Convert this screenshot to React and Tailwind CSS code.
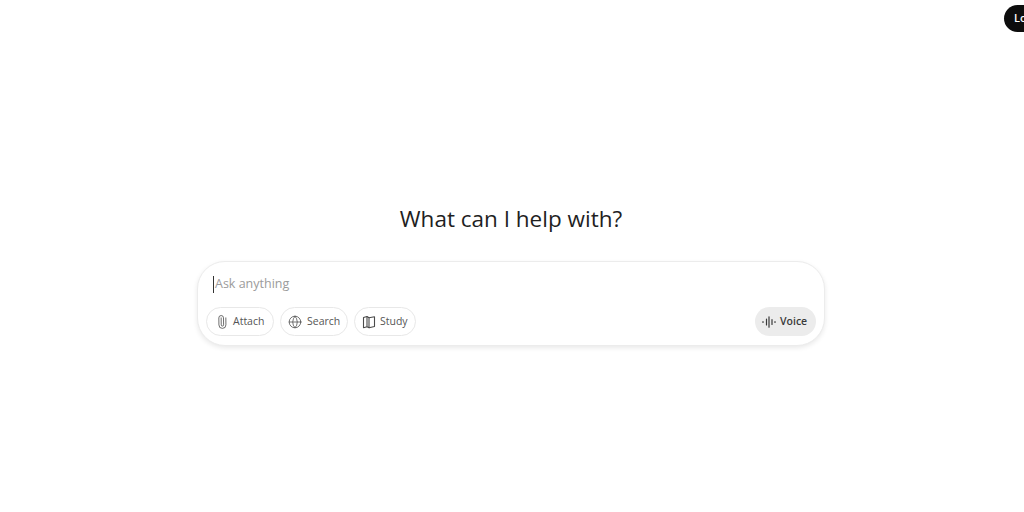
import { Paperclip, Globe } from "lucide-react";

const StudyIcon = ({ className }) => (
  <svg width="14" height="14" viewBox="0 0 14 14" fill="none" stroke="currentColor" strokeWidth="1.1" strokeLinejoin="round" className={className}>
    <path d="M1.5 2.5 5 1.5l2 1.2v10L5 11.7l-3.5 1z" />
    <path d="M7 2.7 12.5 1.8v9.7L7 12.7" />
    <path d="M5 1.5v10.2" />
  </svg>
);

const ToolButton = ({ icon: Icon, label, className, iconClass }) => (
  <button className={`flex h-[29px] items-center rounded-full border border-[#e8e8e8] bg-white text-[10.5px] font-medium text-[#555555] ${className}`}>
    <Icon size={14} strokeWidth={1.3} className={`text-[#4a4a4a] ${iconClass || ""}`} />
    {label}
  </button>
);

const VoiceIcon = () => (
  <svg width="14" height="12" viewBox="0 0 14 12" fill="none" stroke="#3a3a3a" strokeWidth="1.2" strokeLinecap="round">
    <path d="M1 5.5v1M4.5 3v6M7 .8v10.4M10 3.5v5M13 5.5v1" />
  </svg>
);

export default function App() {
  return (
    <div className="flex h-[512px] w-[1024px] flex-col overflow-hidden bg-white font-['Open_Sans','Noto_Sans',sans-serif]">
      <header className="flex h-[204px] justify-start pl-[1004px] pt-[5px]">
        <button className="h-[27px] w-[70px] shrink-0 rounded-full bg-[#0d0d0d] pl-[10px] text-left text-[11px] font-semibold whitespace-nowrap text-white">
          Log in
        </button>
      </header>

      <main className="flex flex-col items-center">
        <h1 className="pr-[2px] text-[22.5px] leading-[30px] font-normal text-[#1f1f1f]">What can I help with?</h1>

        <div className="mt-[27px] mr-[2px] flex h-[85px] w-[628px] flex-col rounded-[28px] border border-[#ececec] bg-white px-[7px] pb-[9px] shadow-[0_2px_5px_rgba(0,0,0,0.09)]">
          <div className="flex h-[45px] items-center pl-[8px] text-[12.5px] text-[#9b9b9b]">
            <span className="mr-px h-[17px] w-px bg-[#333333]" />
            Ask anything
          </div>
          <div className="flex items-center gap-[6px] pr-px pl-px">
            <ToolButton icon={Paperclip} label="Attach" iconClass="mr-[4px] -rotate-45" className="w-[68px] pl-[8px]" />
            <ToolButton icon={Globe} label="Search" iconClass="mr-[5px]" className="w-[68px] pl-[7px]" />
            <ToolButton icon={StudyIcon} label="Study" iconClass="mr-[4px]" className="w-[62px] pl-[7px]" />
            <button className="ml-auto flex h-[29px] w-[61px] items-center gap-[4px] rounded-full bg-[#ececec] pl-[7px] text-[10.5px] font-semibold text-[#3a3a3a]">
              <VoiceIcon />
              Voice
            </button>
          </div>
        </div>
      </main>
    </div>
  );
}
